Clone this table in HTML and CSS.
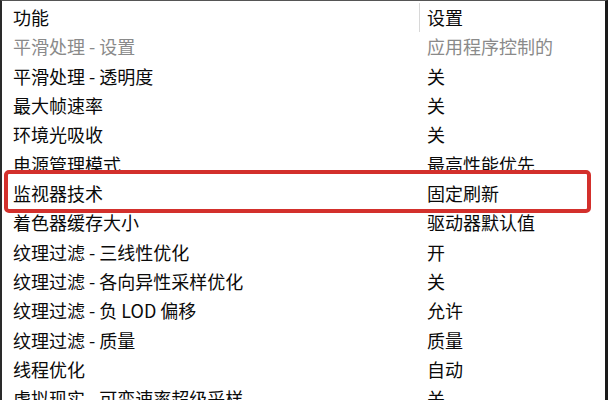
FILE: index.html
```html
<!DOCTYPE html>
<html lang="zh">
<head>
<meta charset="utf-8">
<link rel="stylesheet" href="styles.css">
</head>
<body>
<div class="panel">
  <div class="row head">
    <div class="c1">功能</div>
    <div class="c2">设置</div>
  </div>
  <div class="row dim"><div class="c1">平滑处理 - 设置</div><div class="c2">应用程序控制的</div></div>
  <div class="row"><div class="c1">平滑处理 - 透明度</div><div class="c2">关</div></div>
  <div class="row"><div class="c1">最大帧速率</div><div class="c2">关</div></div>
  <div class="row"><div class="c1">环境光吸收</div><div class="c2">关</div></div>
  <div class="row"><div class="c1">电源管理模式</div><div class="c2">最高性能优先</div></div>
  <div class="row mark"><div class="c1">监视器技术</div><div class="c2">固定刷新</div></div>
  <div class="row"><div class="c1">着色器缓存大小</div><div class="c2">驱动器默认值</div></div>
  <div class="row"><div class="c1">纹理过滤 - 三线性优化</div><div class="c2">开</div></div>
  <div class="row"><div class="c1">纹理过滤 - 各向异性采样优化</div><div class="c2">关</div></div>
  <div class="row"><div class="c1">纹理过滤 - 负 LOD 偏移</div><div class="c2">允许</div></div>
  <div class="row"><div class="c1">纹理过滤 - 质量</div><div class="c2">质量</div></div>
  <div class="row"><div class="c1">线程优化</div><div class="c2">自动</div></div>
  <div class="row"><div class="c1">虚拟现实 - 可变速率超级采样</div><div class="c2">关</div></div>
</div>
</body>
</html>
```
FILE: styles.css
```css
html, body {
  margin: 0;
  padding: 0;
  background: #fff;
}
body {
  width: 608px;
  height: 400px;
  overflow: hidden;
}
.panel {
  box-sizing: border-box;
  width: 608px;
  height: 400px;
  border-left: 2px solid #2a2a2a;
  border-right: 3px solid #1a1a1a;
  border-top: 1px solid #555;
  padding-top: 2px;
  font-family: "Noto Sans CJK SC", "Noto Sans", sans-serif;
  font-size: 18px;
  color: #0a0a0a;
}
.row {
  display: grid;
  grid-template-columns: 417px 1fr;
  height: 29.35px;
  line-height: 29.35px;
  white-space: nowrap;
  position: relative;
}
.c1 {
  padding-left: 11px;
}
.c2 {
  padding-left: 8px;
}
.head .c2 {
  border-left: 1px solid #d8d8d8;
  padding-left: 7px;
}
.dim {
  color: #8a8a8a;
}
.mark::after {
  content: "";
  position: absolute;
  left: 2px;
  right: 14px;
  top: -9px;
  bottom: -5px;
  border: 4px solid #d3302c;
  border-radius: 5px;
  pointer-events: none;
}
```
